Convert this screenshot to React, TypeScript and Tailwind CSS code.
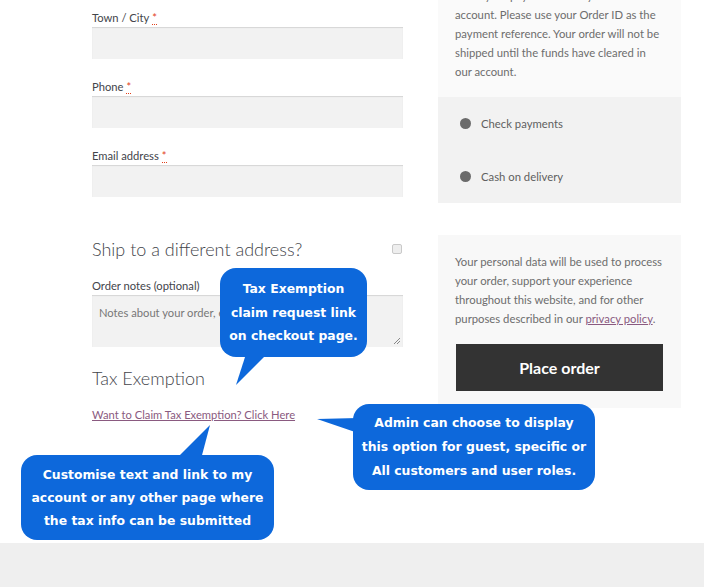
import React from "react";

const FIELDS = ["Town / City", "Phone", "Email address"];

function Required() {
  return (
    <abbr className="ml-[3px] text-[#e2401c] no-underline border-b border-dotted border-[#e2401c]" title="required">
      *
    </abbr>
  );
}

function Field({ label }: { label: string }) {
  return (
    <div className="mb-[18px]">
      <label className="block text-[11.2px] leading-[19px] text-[#43454b]">
        {label}
        <Required />
      </label>
      <div className="h-[32px] bg-[#f2f2f2] shadow-[inset_0_1px_1px_rgba(0,0,0,0.12)]" />
    </div>
  );
}

function Callout({ className, lines }: { className: string; lines: string[] }) {
  return (
    <div
      className={`absolute flex flex-col items-center justify-center rounded-[16px] bg-[#0d68db] text-center text-[12.4px] font-bold text-white ${className}`}
      style={{ fontFamily: '"DejaVu Sans", Verdana, sans-serif' }}
    >
      {lines.map((l) => (
        <div key={l} className="whitespace-nowrap">
          {l}
        </div>
      ))}
    </div>
  );
}

export default function App() {
  return (
    <div
      className="relative h-[587px] w-[704px] overflow-hidden bg-white"
      style={{ fontFamily: 'Lato, "Open Sans", sans-serif' }}
    >
      <div className="flex h-[543px] gap-[35px] pl-[92px]">
        {/* Billing form */}
        <div className="w-[311px] pt-[8px]">
          {FIELDS.map((f) => (
            <Field key={f} label={f} />
          ))}

          <div className="mt-[38px] flex items-center justify-between">
            <h3 className="text-[18px] font-light leading-[28px] text-[#43454b]">Ship to a different address?</h3>
            <span className="mr-[1px] h-[10px] w-[10px] rounded-[2px] border border-[#c9c9c9] bg-[#eeeeee]" />
          </div>

          <label className="mt-[13px] block text-[11.2px] leading-[19px] text-[#43454b]">Order notes (optional)</label>
          <div className="relative h-[52px] overflow-hidden whitespace-nowrap bg-[#f2f2f2] px-[7px] pt-[8px] text-[11.2px] leading-[19px] text-[#777777] shadow-[inset_0_1px_1px_rgba(0,0,0,0.12)]">
            Notes about your order, e.g. special notes for delivery.
            <svg className="absolute bottom-[2px] right-[2px]" width="8" height="8" viewBox="0 0 8 8">
              <path d="M1 7 L7 1 M4 7 L7 4" stroke="#888" strokeWidth="1" />
            </svg>
          </div>

          <h3 className="mt-[17px] text-[18px] font-light leading-[28px] text-[#43454b]">Tax Exemption</h3>
          <a className="mt-[13px] block text-[11.2px] leading-[19px] text-[#8a5a80] underline">
            Want to Claim Tax Exemption? Click Here
          </a>
        </div>

        {/* Order review */}
        <div className="w-[243px] whitespace-nowrap text-[11.3px] leading-[19px] text-[#6d6d6d]">
          <div className="-mt-[14px] bg-[#fafafa] pb-[16px] pl-[17px]">
            Make your payment directly into our bank
            <br />
            account. Please use your Order ID as the
            <br />
            payment reference. Your order will not be
            <br />
            shipped until the funds have cleared in
            <br />
            our account.
          </div>
          <div className="bg-[#f2f2f2]">
            {["Check payments", "Cash on delivery"].map((p) => (
              <div key={p} className="flex h-[53px] items-center gap-[10px] pl-[22px]">
                <span className="h-[11px] w-[11px] rounded-full bg-[#6b6b6b]" />
                <span className="text-[#5f5f5f]">{p}</span>
              </div>
            ))}
          </div>

          <div className="mt-[32px] bg-[#f8f8f8] px-[17px] pb-[17px] pt-[17px]">
            Your personal data will be used to process
            <br />
            your order, support your experience
            <br />
            throughout this website, and for other
            <br />
            purposes described in our <span className="text-[#8a5a80] underline">privacy policy</span>.
            <button className="ml-[1px] mt-[16px] flex h-[47px] w-[207px] items-center justify-center bg-[#333333] text-[16px] font-bold text-white">
              Place order
            </button>
          </div>
        </div>
      </div>

      <div className="h-[44px] bg-[#efefef]" />

      {/* Callout tails */}
      <svg className="pointer-events-none absolute left-0 top-0" width="704" height="587">
        <polygon points="246,354 267,354 236,385" fill="#0d68db" />
        <polygon points="317,419 358,418 358,433" fill="#0d68db" />
        <polygon points="176,459 201,459 210,425" fill="#0d68db" />
      </svg>

      <Callout
        className="left-[220px] top-[268px] h-[89px] w-[147px] leading-[23.5px]"
        lines={["Tax Exemption", "claim request link", "on checkout page."]}
      />
      <Callout
        className="left-[353px] top-[404px] h-[86px] w-[242px] leading-[24px]"
        lines={["Admin can choose to display", "this option for guest, specific or", "All customers and user roles."]}
      />
      <Callout
        className="left-[21px] top-[455px] h-[85px] w-[253px] leading-[23px]"
        lines={["Customise text and link to my", "account or any other page where", "the tax info can be submitted"]}
      />
    </div>
  );
}
